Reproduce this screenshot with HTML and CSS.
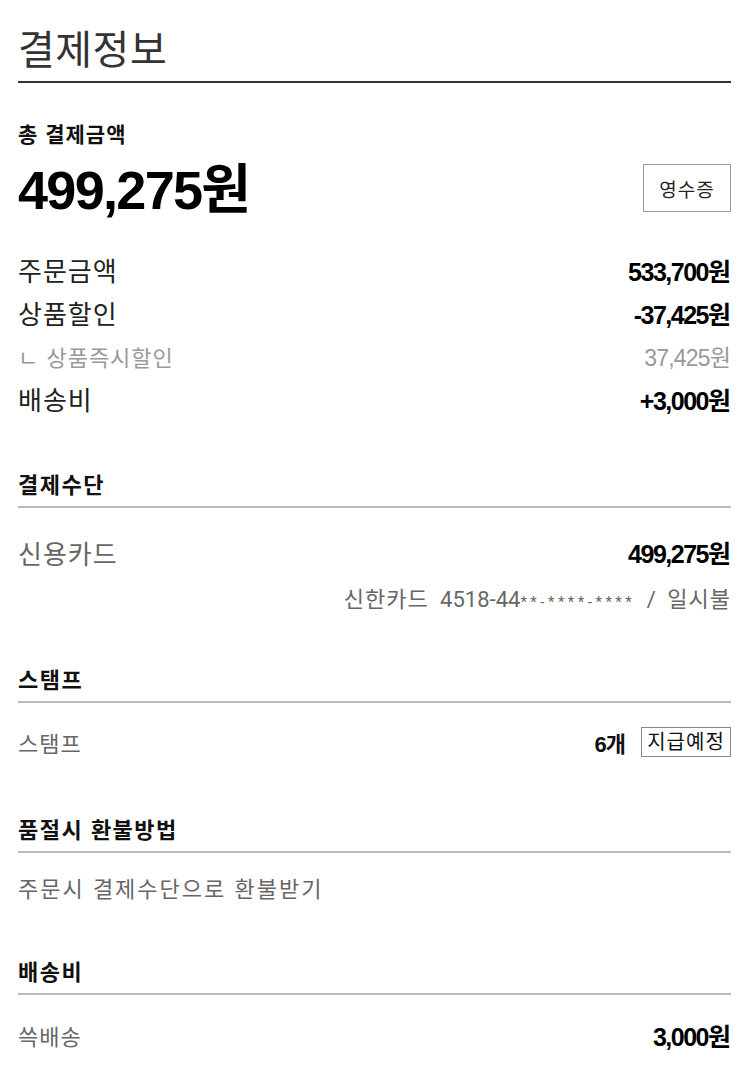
FILE: index.html
```html
<!DOCTYPE html>
<html lang="ko">
<head>
<meta charset="utf-8">
<title>결제정보</title>
<link rel="stylesheet" href="styles.css">
</head>
<body>
<main class="page">
  <header class="header">
    <h1 class="title">결제정보</h1>
  </header>

  <section class="total">
    <p class="total-label">총 결제금액</p>
    <div class="total-row">
      <span class="total-amount">499,275<span class="won">원</span></span>
      <button class="btn-receipt" type="button">영수증</button>
    </div>
  </section>

  <section class="summary">
    <div class="row"><span class="label">주문금액</span><span class="num">533,700<span class="won">원</span></span></div>
    <div class="row"><span class="label">상품할인</span><span class="num">-37,425<span class="won">원</span></span></div>
    <div class="row row-sub"><span class="label">ㄴ 상품즉시할인</span><span class="num">37,425<span class="won">원</span></span></div>
    <div class="row"><span class="label">배송비</span><span class="num">+3,000<span class="won">원</span></span></div>
  </section>

  <section class="sec sec-pay">
    <h2 class="sec-title">결제수단</h2>
    <div class="sec-body">
      <div class="row row-pay"><span class="label label-gray">신용카드</span><span class="num">499,275<span class="won">원</span></span></div>
      <p class="card-detail"><span class="kr">신한카드</span> 4518-44<span class="mask">**-****-****</span> / <span class="kr">일시불</span></p>
    </div>
  </section>

  <section class="sec sec-stamp">
    <h2 class="sec-title">스탬프</h2>
    <div class="sec-body">
      <div class="row row-small">
        <span class="label-small">스탬프</span>
        <span class="stamp-value"><span class="num-small">6<span class="won">개</span></span><span class="badge">지급예정</span></span>
      </div>
    </div>
  </section>

  <section class="sec sec-refund">
    <h2 class="sec-title">품절시 환불방법</h2>
    <div class="sec-body">
      <p class="refund-text">주문시 결제수단으로 환불받기</p>
    </div>
  </section>

  <section class="sec sec-ship">
    <h2 class="sec-title">배송비</h2>
    <div class="sec-body">
      <div class="row row-small"><span class="label-small">쓱배송</span><span class="num">3,000<span class="won">원</span></span></div>
    </div>
  </section>
</main>
</body>
</html>
```

FILE: styles.css
```css
* { box-sizing: border-box; }

html, body {
  margin: 0;
  padding: 0;
  background: #fff;
}

body {
  font-family: "Noto Sans CJK KR", "Noto Sans", sans-serif;
  color: #222;
}

p, h1, h2 { margin: 0; }

.page {
  padding: 0 19px 40px 18px;
}

.header {
  padding-top: 22px;
  padding-bottom: 9px;
  border-bottom: 2px solid #333;
}

.title {
  font-size: 40px;
  line-height: 50px;
  font-weight: 400;
  color: #333;
  letter-spacing: 0.5px;
}

.total {
  margin-top: 36px;
}

.total-label {
  font-size: 21px;
  line-height: 28px;
  font-weight: 700;
  color: #111;
  letter-spacing: 1px;
}

.total-row {
  margin-top: 11px;
  display: flex;
  align-items: center;
  justify-content: space-between;
  height: 60px;
}

.total-amount {
  font-family: "Liberation Sans", Arial, sans-serif;
  font-size: 54px;
  line-height: 60px;
  font-weight: 700;
  letter-spacing: -1.7px;
  color: #000;
}

.total-amount .won {
  font-family: "Noto Sans CJK KR", sans-serif;
  letter-spacing: 0;
}

.btn-receipt {
  width: 88px;
  height: 48px;
  padding: 0;
  background: #fff;
  border: 1px solid #999;
  border-radius: 0;
  font-family: "Noto Sans CJK KR", sans-serif;
  font-size: 19px;
  letter-spacing: 1px;
  color: #222;
}

.summary {
  margin-top: 30px;
}

.row {
  display: flex;
  align-items: center;
  justify-content: space-between;
  height: 43px;
}

.label {
  font-size: 26px;
  color: #222;
  letter-spacing: 1px;
}

.label-gray { color: #666; }

.num {
  font-family: "Liberation Sans", Arial, sans-serif;
  font-size: 25px;
  font-weight: 700;
  letter-spacing: -1.5px;
  color: #000;
}

.num .won,
.num-small .won {
  font-family: "Noto Sans CJK KR", sans-serif;
  letter-spacing: 0;
}

.row-sub .label {
  font-size: 22px;
  color: #999;
}

.row-sub .num {
  font-size: 23px;
  font-weight: 400;
  color: #999;
  letter-spacing: -0.8px;
}

.sec-title {
  font-size: 22px;
  line-height: 25px;
  font-weight: 700;
  color: #111;
  letter-spacing: 1.5px;
  padding-bottom: 10px;
  border-bottom: 2px solid #bbb;
}

.sec-pay { margin-top: 51px; }
.sec-stamp { margin-top: 41px; }
.sec-refund { margin-top: 55px; }
.sec-ship { margin-top: 55px; }

.sec-pay .sec-body { padding-top: 22px; }
.sec-stamp .sec-body { padding-top: 20px; }
.sec-refund .sec-body { padding-top: 18px; }
.sec-ship .sec-body { padding-top: 20px; }

.row-pay { height: 44px; }

.card-detail {
  text-align: right;
  font-family: "Roboto", "Noto Sans CJK KR", sans-serif;
  font-size: 22px;
  line-height: 46px;
  color: #666;
  word-spacing: 6px;
}

.card-detail .kr {
  font-family: "Noto Sans CJK KR", sans-serif;
  letter-spacing: 1px;
}

.card-detail .mask {
  font-size: 15px;
  letter-spacing: 3.5px;
}

.row-small { height: 38px; }
.sec-ship .row-small { height: 40px; }

.label-small {
  font-size: 22px;
  color: #666;
  letter-spacing: 1px;
}

.stamp-value {
  display: flex;
  align-items: center;
  gap: 15px;
}

.num-small {
  font-family: "Liberation Sans", Arial, sans-serif;
  font-size: 22px;
  font-weight: 700;
  letter-spacing: -1px;
  color: #111;
}

.badge {
  display: inline-block;
  width: 90px;
  height: 30px;
  line-height: 26px;
  text-align: center;
  border: 1px solid #888;
  font-size: 20px;
  letter-spacing: 1px;
  color: #111;
}

.refund-text {
  font-size: 22px;
  line-height: 32px;
  color: #666;
  letter-spacing: 2px;
}
```
